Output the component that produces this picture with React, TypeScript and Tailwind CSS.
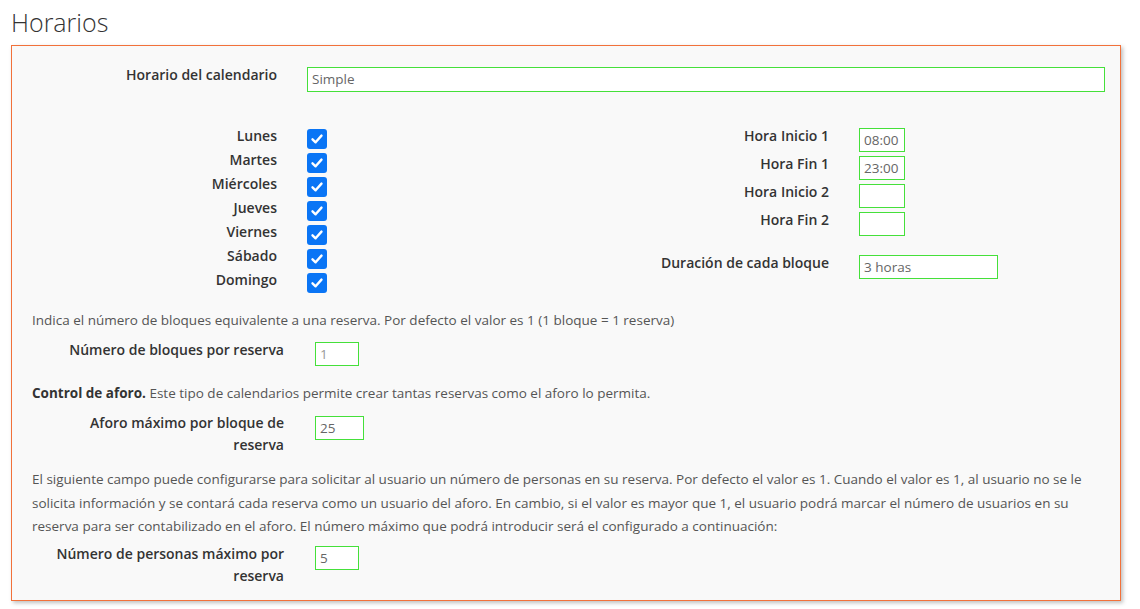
import React from "react";

const days = ["Lunes", "Martes", "Miércoles", "Jueves", "Viernes", "Sábado", "Domingo"];

const horas = [
  { label: "Hora Inicio 1", value: "08:00" },
  { label: "Hora Fin 1", value: "23:00" },
  { label: "Hora Inicio 2", value: "" },
  { label: "Hora Fin 2", value: "" },
];

function Field({ value, className }: { value: string; className: string }) {
  return (
    <div
      className={
        "h-[24px] border border-[#45e03a] bg-white px-[4px] text-[13.5px] leading-[22px] text-[#666] " +
        className
      }
    >
      {value}
    </div>
  );
}

function Check() {
  return (
    <div className="mt-[3px] flex h-[20px] w-[20px] items-center justify-center rounded-[3px] bg-[#0a75f5]">
      <svg width="14" height="14" viewBox="0 0 14 14" fill="none">
        <path d="M2.5 7.3 L5.6 10.3 L11.5 3.6" stroke="white" strokeWidth="2.4" strokeLinecap="round" strokeLinejoin="round" />
      </svg>
    </div>
  );
}

export default function App() {
  return (
    <div className="min-h-screen bg-white px-[11px] pt-[7px] text-[#333]" style={{ fontFamily: '"Open Sans", "Liberation Sans", sans-serif' }}>
      <h1 className="text-[25px] font-light leading-[30px] text-[#333]">Horarios</h1>

      <div className="mt-[8px] w-[1110px] border border-[#f2713a] bg-[#f9f9f9] pb-[13px] pl-[20px] pr-[15px] pt-[21px] shadow-[2px_2px_4px_rgba(0,0,0,0.25)]">
        {/* Horario del calendario */}
        <div className="flex items-start">
          <div className="w-[245px] text-right text-sm font-semibold leading-[16px]">Horario del calendario</div>
          <div className="ml-[30px] h-[25px] flex-1 border border-[#45e03a] bg-white px-[4px] text-[13.5px] leading-[23px] text-[#666]">
            Simple
          </div>
        </div>

        {/* Días y horas */}
        <div className="mt-[34px] flex items-start">
          <div className="w-[536px]">
            {days.map((d) => (
              <div key={d} className="flex h-[24px] items-start">
                <div className="w-[245px] text-right text-sm font-semibold leading-[20px]">{d}</div>
                <div className="ml-[30px]">
                  <Check />
                </div>
              </div>
            ))}
          </div>
          <div className="pt-[2px]">
            {horas.map((h) => (
              <div key={h.label} className="flex h-[28px] items-start">
                <div className="w-[261px] text-right text-sm font-semibold leading-[16px]">{h.label}</div>
                <Field value={h.value} className="ml-[30px] w-[46px]" />
              </div>
            ))}
            <div className="mt-[15px] flex items-start">
              <div className="w-[261px] text-right text-sm font-semibold leading-[16px]">Duración de cada bloque</div>
              <Field value="3 horas" className="ml-[30px] w-[139px]" />
            </div>
          </div>
        </div>

        <p className="mt-[16px] text-[13.5px] leading-[20px] text-[#555]">
          Indica el número de bloques equivalente a una reserva. Por defecto el valor es 1 (1 bloque = 1 reserva)
        </p>

        <div className="mt-[12px] flex items-start">
          <div className="w-[252px] text-right text-sm font-semibold leading-[16px]">Número de bloques por reserva</div>
          <Field value="1" className="ml-[31px] w-[44px] !text-[#999]" />
        </div>

        <p className="mt-[17px] text-[13.5px] leading-[20px] text-[#555]">
          <span className="font-bold text-[#333]">Control de aforo.</span> Este tipo de calendarios permite crear tantas reservas como el aforo lo permita.
        </p>

        <div className="mt-[9px] flex items-start">
          <div className="w-[252px] text-right text-sm font-semibold leading-[22px]">
            Aforo máximo por bloque de
            <br />
            reserva
          </div>
          <Field value="25" className="ml-[31px] mt-[4px] w-[49px]" />
        </div>

        <p className="mt-[12px] text-[13.5px] leading-[23.5px] text-[#555]">
          El siguiente campo puede configurarse para solicitar al usuario un número de personas en su reserva. Por defecto el valor es 1. Cuando el valor es 1, al usuario no se le solicita información y se contará cada reserva como un usuario del aforo. En cambio, si el valor es mayor que 1, el usuario podrá marcar el número de usuarios en su reserva para ser contabilizado en el aforo. El número máximo que podrá introducir será el configurado a continuación:
        </p>

        <div className="mt-[4.5px] flex items-start">
          <div className="w-[252px] text-right text-sm font-semibold leading-[22px]">
            Número de personas máximo por
            <br />
            reserva
          </div>
          <Field value="5" className="ml-[31px] mt-[3px] w-[44px]" />
        </div>
      </div>
    </div>
  );
}
